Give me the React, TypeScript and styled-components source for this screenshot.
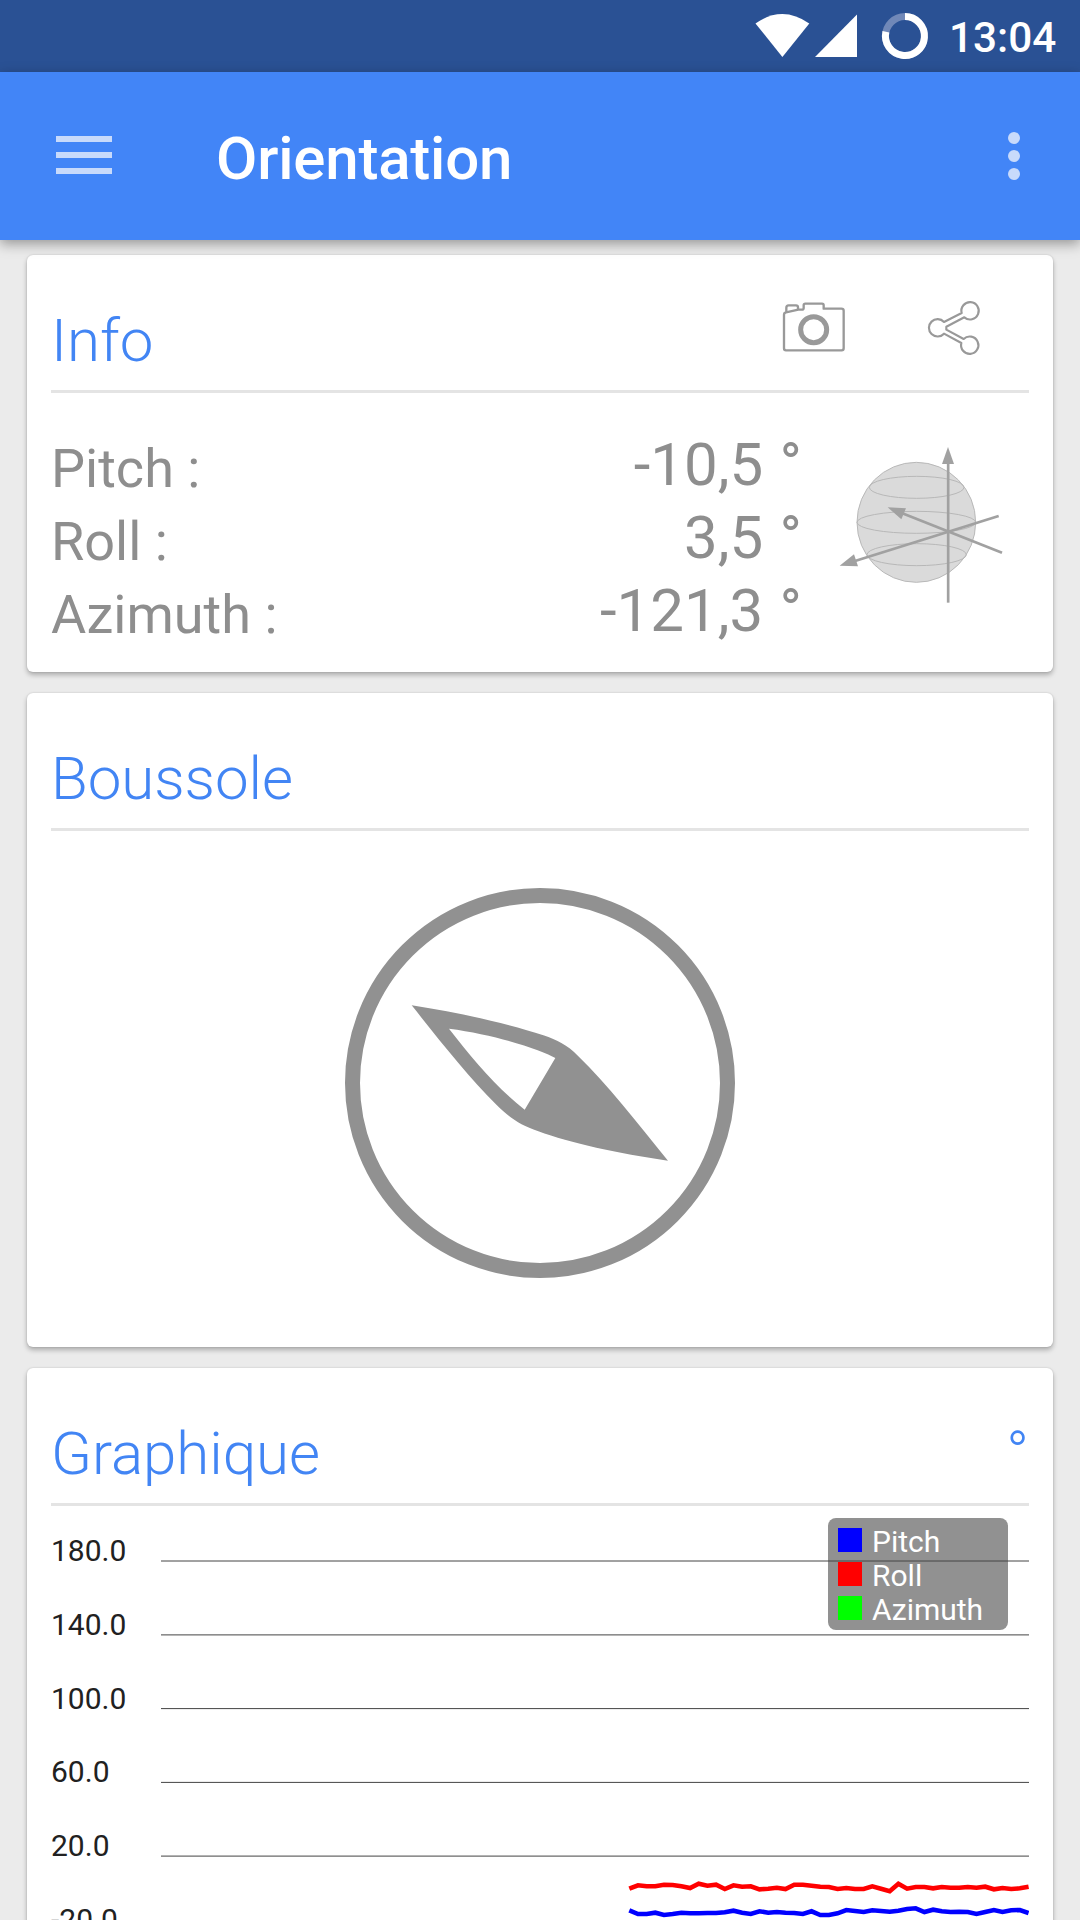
import React from "react";
import styled, { createGlobalStyle } from "styled-components";

const GlobalStyle = createGlobalStyle`
  html, body {
    margin: 0;
    padding: 0;
    height: 1920px;
    overflow: hidden;
    background: #ebebeb;
  }
  * { box-sizing: border-box; }
`;

const Screen = styled.div`
  width: 1080px;
  height: 1920px;
  overflow: hidden;
  display: flex;
  flex-direction: column;
  background: #ebebeb;
  font-family: Roboto, "Noto Sans", sans-serif;
  font-weight: 400;
`;

const StatusBar = styled.div`
  flex: none;
  height: 72px;
  padding-right: 25px;
  display: flex;
  justify-content: flex-end;
  align-items: flex-start;
  background: #2a5194;
`;

const StatusIcons = styled.svg`
  display: block;
  width: 180px;
  height: 72px;
`;

const Clock = styled.div`
  width: 106px;
  margin-left: 16px;
  padding-top: 3px;
  font-size: 42.3px;
  line-height: 70px;
  font-weight: 500;
  text-align: right;
  color: #fff;
  white-space: nowrap;
`;

const AppBar = styled.header`
  flex: none;
  position: relative;
  z-index: 1;
  height: 168px;
  padding: 0 60px 0 56px;
  display: flex;
  align-items: center;
  background: #4285f7;
  box-shadow: 0 4px 12px rgba(0, 0, 0, 0.36);
`;

const MenuButton = styled.div`
  width: 56px;
  height: 38px;
  display: flex;
  flex-direction: column;
  justify-content: space-between;
  margin-top: -2px;
`;

const MenuLine = styled.span`
  height: 6px;
  background: #c8dafb;
`;

const AppTitle = styled.h1`
  flex: 1;
  margin: 5px 0 0 104px;
  font-size: 60px;
  line-height: 70px;
  font-weight: 500;
  letter-spacing: -0.2px;
  color: #fff;
`;

const Overflow = styled.div`
  width: 12px;
  display: flex;
  flex-direction: column;
  gap: 6px;
`;

const Dot = styled.span`
  height: 12px;
  border-radius: 50%;
  background: #c8dafb;
`;

const Cards = styled.main`
  flex: none;
  padding: 15px 27px 0;
  display: flex;
  flex-direction: column;
  gap: 21px;
`;

const Card = styled.section<{ $height: number }>`
  height: ${(p) => p.$height}px;
  padding: 0 24px;
  border-radius: 6px;
  background: #fff;
  box-shadow: 0 3px 5px rgba(0, 0, 0, 0.27), 0 0 2px rgba(0, 0, 0, 0.14);
`;

const CardHeader = styled.div`
  height: 138px;
  padding-top: 45px;
  display: flex;
  align-items: flex-start;
  border-bottom: 3px solid #e4e4e4;
`;

const CardTitle = styled.h2`
  flex: 1;
  margin: 6px 0 0;
  font-size: 60px;
  line-height: 70px;
  font-weight: 300;
  letter-spacing: -0.05px;
  color: #4285f4;
`;

const Unit = styled.span`
  margin-top: 5px;
  font-size: 60px;
  line-height: 70px;
  font-weight: 300;
  color: #4285f4;
`;

const CameraIcon = styled.svg`
  display: block;
  width: 68px;
  height: 56px;
`;

const ShareIcon = styled.svg`
  display: block;
  width: 56px;
  height: 56px;
  margin: 0 47px 0 78px;
`;

const InfoBody = styled.div`
  display: flex;
  color: #8e8e8e;
  line-height: 73px;
`;

const Labels = styled.div`
  flex: 1;
  padding-top: 39px;
  font-size: 54px;
`;

const Values = styled.div`
  padding-top: 35px;
  font-size: 60px;
  word-spacing: 1.5px;
  text-align: right;
`;

const Sphere = styled.svg`
  display: block;
  width: 170px;
  height: 160px;
  margin: 52px 22px 0 35px;
`;

const CompassBody = styled.div`
  height: 516px;
  padding-top: 56.7px;
  display: flex;
  justify-content: center;
`;

const Compass = styled.svg`
  display: block;
  width: 390px;
  height: 390px;
`;

const Chart = styled.div`
  position: relative;
  display: flex;
`;

const AxisLabels = styled.div`
  width: 110px;
  padding-top: 8px;
  font-size: 30px;
  line-height: 73.8px;
  color: #212121;
`;

const Plot = styled.svg`
  display: block;
  position: relative;
  width: 868px;
  height: 430px;
`;

const Legend = styled.div`
  position: absolute;
  top: 12px;
  right: 21px;
  width: 180px;
  height: 112px;
  padding: 10px;
  display: flex;
  flex-direction: column;
  gap: 10px;
  border-radius: 8px;
  background: #919191;
`;

const LegendItem = styled.div`
  height: 24px;
  display: flex;
  align-items: center;
  gap: 10px;
  font-size: 30px;
  line-height: 30px;
  color: #fff;
`;

const LegendText = styled.span`
  padding-top: 3px;
`;

const Swatch = styled.span<{ $color: string }>`
  width: 24px;
  height: 24px;
  background: ${(p) => p.$color};
`;

const readings = [
  { name: "Pitch", value: "-10,5", color: "#0000ff" },
  { name: "Roll", value: "3,5", color: "#ff0000" },
  { name: "Azimuth", value: "-121,3", color: "#00ff00" },
];

const ticks = ["180.0", "140.0", "100.0", "60.0", "20.0", "-20.0"];
const gridLines = [55, 128.9, 202.6, 276.4, 350.1, 424];

// Samples in thirds of a pixel below SERIES_TOP, one every SAMPLE_STEP pixels.
const SERIES_TOP = 334;
const SAMPLE_START = 468.3;
const SAMPLE_STEP = 8.68;
const rollSamples = [
  146, 136, 139, 139, 134, 135, 139, 144, 131, 137, 134, 147, 136, 140, 139, 148,
  146, 143, 147, 134, 134, 137, 140, 141, 147, 144, 147, 147, 139, 146, 154, 131,
  146, 141, 141, 145, 141, 143, 143, 141, 143, 140, 148, 144, 147, 145, 140,
];
const pitchSamples = [
  211, 222, 222, 218, 225, 222, 218, 220, 220, 219, 219, 217, 212, 218, 222, 214,
  218, 216, 218, 219, 222, 214, 225, 225, 220, 210, 213, 216, 211, 213, 215, 212,
  207, 205, 216, 209, 214, 216, 215, 216, 222, 216, 210, 216, 211, 210, 219,
];

const toPoints = (samples: number[]) =>
  samples
    .map((s, i) => `${(SAMPLE_START + i * SAMPLE_STEP).toFixed(1)},${(SERIES_TOP + s / 3).toFixed(1)}`)
    .join(" ");

function StatusGlyphs() {
  return (
    <StatusIcons viewBox="0 0 180 72" fill="#fff">
      <path d="M2.500 23.500 Q29.300 4.500 56.300 23.500 L29.400 57 Z" />
      <path d="M62 57 L104 14.500 V57 Z" />
      <circle cx="152" cy="36" r="19.500" fill="none" stroke="#7088b8" strokeWidth="7" />
      <path d="M152 16.500 A19.500 19.500 0 1 1 132.900 31.800" fill="none" stroke="#fff" strokeWidth="7" />
    </StatusIcons>
  );
}

export default function App() {
  return (
    <Screen>
      <GlobalStyle />
      <StatusBar>
        <StatusGlyphs />
        <Clock>13:04</Clock>
      </StatusBar>
      <AppBar>
        <MenuButton>
          <MenuLine />
          <MenuLine />
          <MenuLine />
        </MenuButton>
        <AppTitle>Orientation</AppTitle>
        <Overflow>
          <Dot />
          <Dot />
          <Dot />
        </Overflow>
      </AppBar>
      <Cards>
        <Card $height={417}>
          <CardHeader>
            <CardTitle>Info</CardTitle>
            <CameraIcon viewBox="120 90 204 168" fill="none" stroke="#999" strokeWidth="7" strokeLinejoin="round">
              <path d="M132 134 Q132 128 138 127 L175 119 H186 Q191 119 191 114 V106 Q191 101 196 101 H246 Q251 101 251 106 V116 H304 Q311 116 311 122 V235 Q311 241 305 241 H138 Q132 241 132 235 Z" />
              <path d="M139 126 V113 Q139 106 146 106 H168 Q174 106 174 112 V119" />
              <circle cx="221" cy="179" r="39" strokeWidth="15" />
            </CameraIcon>
            <ShareIcon viewBox="558 90 168 168" fill="none" stroke="#999" strokeWidth="6.500" strokeLinejoin="round">
              <path d="M612 156 L665 129 A26 26 0 1 1 673 142 L619 170 V179 L671 207 A26 26 0 1 1 664 219 L612 191 A26 26 0 1 1 612 156 Z" />
            </ShareIcon>
          </CardHeader>
          <InfoBody>
            <Labels>
              {readings.map((r) => (
                <div key={r.name}>{r.name} :</div>
              ))}
            </Labels>
            <Values>
              {readings.map((r) => (
                <div key={r.name}>{r.value} °</div>
              ))}
            </Values>
            <Sphere viewBox="111 75 510 480" fill="none" stroke="#b5b5b5" strokeWidth="2.800">
              <ellipse cx="349" cy="307" rx="178" ry="180" fill="#dadada" />
              <ellipse cx="350" cy="202" rx="142" ry="33" />
              <ellipse cx="349" cy="307" rx="178" ry="33" />
              <ellipse cx="350" cy="404" rx="149" ry="33" />
              <g stroke="#a1a1a1" strokeWidth="8">
                <path d="M444.500 548 V130" />
                <path d="M596 288 L165 423" />
                <path d="M606 398 L305 279" />
              </g>
              <g fill="#a1a1a1" stroke="none">
                <path d="M444 81 L462 132 H426 Z" />
                <path d="M119 437 L162 403 L174 439 Z" />
                <path d="M263 262 L318 265 L304 298 Z" />
              </g>
            </Sphere>
          </InfoBody>
        </Card>
        <Card $height={654}>
          <CardHeader>
            <CardTitle>Boussole</CardTitle>
          </CardHeader>
          <CompassBody>
            <Compass viewBox="45 53 1170 1170">
              <circle cx="630" cy="638" r="562.500" fill="none" stroke="#919191" strokeWidth="45" />
              <path
                fill="#919191"
                fillRule="evenodd"
                d="M245 405 C405 430 545 463 640 495 C683 510 710 522 745 558 C830 640 922 758 1014 871 C865 850 720 818 625 783 C570 762 545 748 500 704 C415 620 330 512 245 405 Z M357 475 C428 567 500 652 584 718 L676 563 C640 541 500 493 357 475 Z"
              />
            </Compass>
          </CompassBody>
        </Card>
        <Card $height={700}>
          <CardHeader>
            <CardTitle>Graphique</CardTitle>
            <Unit>°</Unit>
          </CardHeader>
          <Chart>
            <Legend>
              {readings.map((r) => (
                <LegendItem key={r.name}>
                  <Swatch $color={r.color} />
                  <LegendText>{r.name}</LegendText>
                </LegendItem>
              ))}
            </Legend>
            <AxisLabels>
              {ticks.map((t) => (
                <div key={t}>{t}</div>
              ))}
            </AxisLabels>
            <Plot viewBox="0 0 868 430" fill="none">
              {gridLines.map((y) => (
                <path key={y} d={`M0 ${y} H868`} stroke="#444" strokeWidth="1" />
              ))}
              <polyline points={toPoints(rollSamples)} stroke="#ff0000" strokeWidth="4.600" />
              <polyline points={toPoints(pitchSamples)} stroke="#0000ff" strokeWidth="4.600" />
            </Plot>
          </Chart>
        </Card>
      </Cards>
    </Screen>
  );
}
